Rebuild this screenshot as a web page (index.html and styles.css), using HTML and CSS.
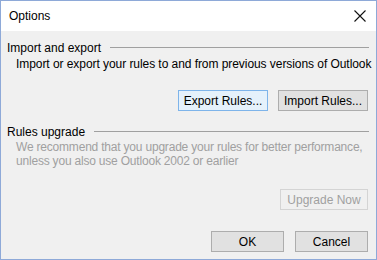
FILE: index.html
```html
<!DOCTYPE html>
<html lang="en">
<head>
  <meta charset="UTF-8">
  <title>Options</title>
  <link rel="stylesheet" href="styles.css">
</head>
<body>
  <div class="window">
    <div class="titlebar">
      <span class="title">Options</span>
      <svg class="close" width="14" height="14" viewBox="0 0 14 14">
        <path d="M1.5 1.5 L12.5 12.5 M12.5 1.5 L1.5 12.5" stroke="#111" stroke-width="1.1" fill="none"/>
      </svg>
    </div>

    <div class="content">
      <div class="group-head">
        <span>Import and export</span>
        <div class="rule"></div>
      </div>
      <div class="desc">Import or export your rules to and from previous versions of Outlook</div>
      <div class="row row-import">
        <button class="btn btn-wide focused">Export Rules...</button>
        <button class="btn btn-wide">Import Rules...</button>
      </div>

      <div class="group-head group-upgrade">
        <span>Rules upgrade</span>
        <div class="rule"></div>
      </div>
      <div class="desc muted">We recommend that you upgrade your rules for better performance,<br>unless you also use Outlook 2002 or earlier</div>
      <div class="row row-upgrade">
        <button class="btn btn-upgrade" disabled>Upgrade Now</button>
      </div>

      <div class="row row-footer">
        <button class="btn btn-small">OK</button>
        <button class="btn btn-small">Cancel</button>
      </div>
    </div>
  </div>
</body>
</html>
```

FILE: styles.css
```css
body {
  margin: 0;
  font-family: "Liberation Sans", Arial, sans-serif;
  font-size: 12px;
  color: #000;
  background: #fff;
}
.window {
  width: 377px;
  height: 260px;
  box-sizing: border-box;
  border: 1px solid #8ea9d8;
  background: #f0f0f0;
  display: flex;
  flex-direction: column;
  overflow: hidden;
}
.titlebar {
  flex-shrink: 0;
  height: 30px;
  background: #fff;
  display: flex;
  align-items: center;
  justify-content: space-between;
  padding: 0 9px 0 8px;
}
.title {
  line-height: 16px;
}
.close {
  display: block;
  margin-top: -1px;
}
.content {
  padding: 9px 7px 0 6px;
  white-space: nowrap;
}
.group-head {
  display: flex;
  align-items: center;
  gap: 9px;
  line-height: 16px;
  height: 16px;
}
.rule {
  flex: 1;
  height: 1px;
  background: #a0a0a0;
  margin-top: -2px;
}
.desc {
  margin-left: 9px;
  line-height: 16px;
  letter-spacing: -0.06px;
}
.muted {
  color: #a0a0a0;
  line-height: 14px;
  letter-spacing: -0.2px;
}
.row {
  display: flex;
  justify-content: flex-end;
}
.row-import {
  gap: 10px;
  margin-top: 18px;
  padding-right: 1px;
}
.group-upgrade {
  margin-top: 13px;
}
.row-upgrade {
  margin-top: 21px;
  padding-right: 1px;
}
.row-footer {
  gap: 11px;
  margin-top: 21px;
  padding-right: 1px;
}
.btn {
  height: 21px;
  padding: 0;
  font-family: inherit;
  font-size: 12px;
  color: #000;
  background: #e1e1e1;
  border: 1px solid #adadad;
  box-sizing: border-box;
}
.btn-wide {
  width: 90px;
}
.btn-upgrade {
  width: 88px;
}
.btn-small {
  width: 73px;
}
.focused {
  background: #e5f1fb;
  border-color: #7eb4ea;
}
.btn:disabled {
  background: #f0f0f0;
  border-color: #d4d4d4;
  color: #a0a0a0;
}
```
